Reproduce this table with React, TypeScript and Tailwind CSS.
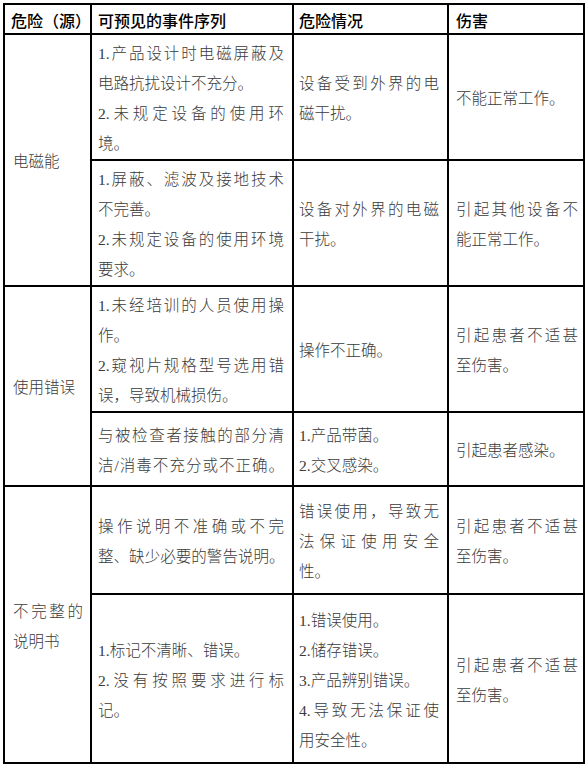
import React from "react";

type Line = { t: string; full?: boolean; tight?: boolean };

type Row = {
  h: string;
  first?: { lines: Line[]; span: number };
  event: Line[];
  danger: Line[];
  harm: Line[];
};

const rows: Row[] = [
  {
    h: "h-[123px]",
    first: { lines: [{ t: "电磁能" }], span: 2 },
    event: [
      { t: "1.产品设计时电磁屏蔽及", full: true },
      { t: "电路抗扰设计不充分。" },
      { t: "2.未规定设备的使用环", full: true },
      { t: "境。" },
    ],
    danger: [{ t: "设备受到外界的电", full: true }, { t: "磁干扰。" }],
    harm: [{ t: "不能正常工作。" }],
  },
  {
    h: "h-[125px]",
    event: [
      { t: "1.屏蔽、滤波及接地技术", full: true },
      { t: "不完善。" },
      { t: "2.未规定设备的使用环境", full: true },
      { t: "要求。" },
    ],
    danger: [{ t: "设备对外界的电磁", full: true }, { t: "干扰。" }],
    harm: [{ t: "引起其他设备不", full: true }, { t: "能正常工作。" }],
  },
  {
    h: "h-[124px]",
    first: { lines: [{ t: "使用错误" }], span: 2 },
    event: [
      { t: "1.未经培训的人员使用操", full: true },
      { t: "作。" },
      { t: "2.窥视片规格型号选用错", full: true },
      { t: "误，导致机械损伤。" },
    ],
    danger: [{ t: "操作不正确。" }],
    harm: [{ t: "引起患者不适甚", full: true }, { t: "至伤害。" }],
  },
  {
    h: "h-[74px]",
    event: [
      { t: "与被检查者接触的部分清", full: true },
      { t: "洁/消毒不充分或不正确。", full: true },
    ],
    danger: [{ t: "1.产品带菌。" }, { t: "2.交叉感染。" }],
    harm: [{ t: "引起患者感染。" }],
  },
  {
    h: "h-[108px]",
    first: {
      lines: [{ t: "不完整的", full: true }, { t: "说明书" }],
      span: 2,
    },
    event: [
      { t: "操作说明不准确或不完", full: true },
      { t: "整、缺少必要的警告说明。", full: true, tight: true },
    ],
    danger: [
      { t: "错误使用，导致无", full: true },
      { t: "法保证使用安全", full: true },
      { t: "性。" },
    ],
    harm: [{ t: "引起患者不适甚", full: true }, { t: "至伤害。" }],
  },
  {
    h: "h-[169px]",
    event: [
      { t: "1.标记不清晰、错误。" },
      { t: "2.没有按照要求进行标", full: true },
      { t: "记。" },
    ],
    danger: [
      { t: "1.错误使用。" },
      { t: "2.储存错误。" },
      { t: "3.产品辨别错误。" },
      { t: "4.导致无法保证使", full: true },
      { t: "用安全性。" },
    ],
    harm: [{ t: "引起患者不适甚", full: true }, { t: "至伤害。" }],
  },
];

const Lines = ({ lines }: { lines: Line[] }) => (
  <>
    {lines.map((l, i) => (
      <div
        key={i}
        className={
          l.full
            ? `whitespace-nowrap text-justify [text-align-last:justify] ${l.tight ? "tracking-[-0.6px]" : ""}`
            : "whitespace-nowrap text-left"
        }
      >
        {l.t}
      </div>
    ))}
  </>
);

const cell = "border-2 border-black align-middle pt-[4px] pb-0 leading-[30px]";

export default function App() {
  return (
    <div className="min-h-[767px] w-[585px] bg-white pl-[3px] pt-[3px]">
      <table
        className="table-fixed border-collapse w-[580px] text-[15.5px] font-light text-[#3a3a3a]"
        style={{ fontFamily: '"Liberation Serif", "Noto Sans CJK SC", serif' }}
      >
        <colgroup>
          <col className="w-[87px]" />
          <col className="w-[202px]" />
          <col className="w-[155px]" />
          <col className="w-[136px]" />
        </colgroup>
        <thead>
          <tr
            className="h-[30px] text-[16px] text-black"
            style={{ fontFamily: '"Noto Sans CJK SC", sans-serif' }}
          >
            <th className="border-2 border-black pl-[6px] pr-0 pt-[2px] text-left font-medium whitespace-nowrap">
              危险（源）
            </th>
            <th className="border-2 border-black pl-[6px] pt-[2px] text-left font-medium">
              可预见的事件序列
            </th>
            <th className="border-2 border-black pl-[5px] pt-[2px] text-left font-medium">
              危险情况
            </th>
            <th className="border-2 border-black pl-[7px] pt-[2px] text-left font-medium">
              伤害
            </th>
          </tr>
        </thead>
        <tbody>
          {rows.map((r, i) => (
            <tr key={i} className={r.h}>
              {r.first && (
                <td rowSpan={r.first.span} className={`${cell} pl-[8px] pr-[7px]`}>
                  <Lines lines={r.first.lines} />
                </td>
              )}
              <td className={`${cell} pl-[6px] pr-[8px]`}>
                <Lines lines={r.event} />
              </td>
              <td className={`${cell} pl-[5px] pr-[8px]`}>
                <Lines lines={r.danger} />
              </td>
              <td className={`${cell} pl-[7px] pr-[5px]`}>
                <Lines lines={r.harm} />
              </td>
            </tr>
          ))}
        </tbody>
      </table>
    </div>
  );
}
